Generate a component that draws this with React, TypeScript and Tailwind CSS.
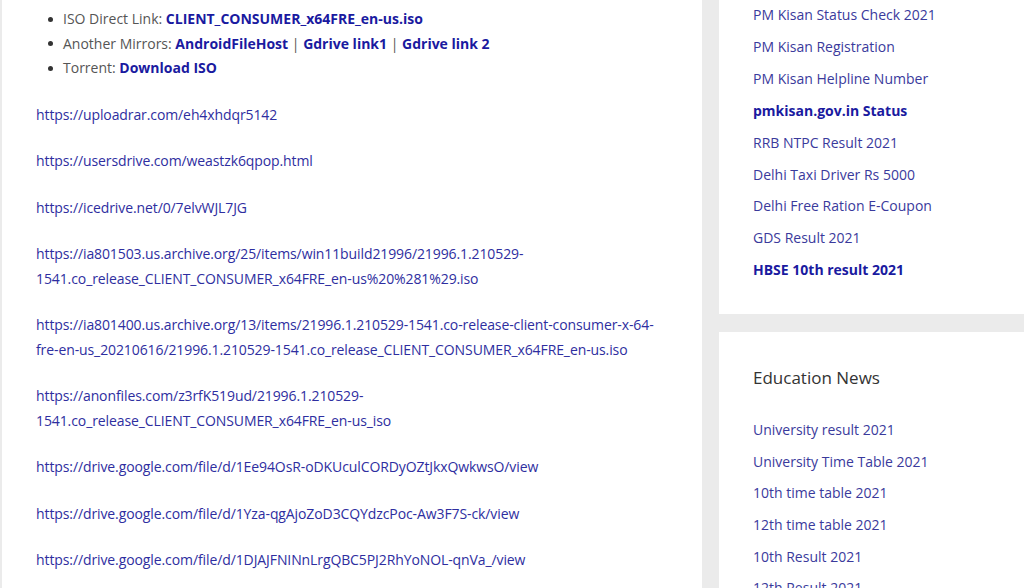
import React from 'react';

const urls: string[][] = [
  ['https://uploadrar.com/eh4xhdqr5142'],
  ['https://usersdrive.com/weastzk6qpop.html'],
  ['https://icedrive.net/0/7elvWJL7JG'],
  [
    'https://ia801503.us.archive.org/25/items/win11build21996/21996.1.210529-',
    '1541.co_release_CLIENT_CONSUMER_x64FRE_en-us%20%281%29.iso',
  ],
  [
    'https://ia801400.us.archive.org/13/items/21996.1.210529-1541.co-release-client-consumer-x-64-',
    'fre-en-us_20210616/21996.1.210529-1541.co_release_CLIENT_CONSUMER_x64FRE_en-us.iso',
  ],
  [
    'https://anonfiles.com/z3rfK519ud/21996.1.210529-',
    '1541.co_release_CLIENT_CONSUMER_x64FRE_en-us_iso',
  ],
  ['https://drive.google.com/file/d/1Ee94OsR-oDKUculCORDyOZtJkxQwkwsO/view'],
  ['https://drive.google.com/file/d/1Yza-qgAjoZoD3CQYdzcPoc-Aw3F7S-ck/view'],
  ['https://drive.google.com/file/d/1DJAJFNINnLrgQBC5PJ2RhYoNOL-qnVa_/view'],
];

const trending = [
  { label: 'PM Kisan Status Check 2021' },
  { label: 'PM Kisan Registration' },
  { label: 'PM Kisan Helpline Number' },
  { label: 'pmkisan.gov.in Status', bold: true },
  { label: 'RRB NTPC Result 2021' },
  { label: 'Delhi Taxi Driver Rs 5000' },
  { label: 'Delhi Free Ration E-Coupon' },
  { label: 'GDS Result 2021' },
  { label: 'HBSE 10th result 2021', bold: true },
];

const education = [
  'University result 2021',
  'University Time Table 2021',
  '10th time table 2021',
  '12th time table 2021',
  '10th Result 2021',
  '12th Result 2021',
];

function Bullet({ children }: { children: React.ReactNode }) {
  return (
    <li className="flex items-center">
      <span className="ml-[12px] mr-[10px] h-[5px] w-[5px] rounded-full bg-[#333]" />
      <span>{children}</span>
    </li>
  );
}

export default function App() {
  return (
    <div
      className="flex h-[588px] w-[1024px] overflow-hidden bg-[#ebebeb] text-[14px]"
      style={{ fontFamily: '"Open Sans", "Noto Sans", sans-serif' }}
    >
      <main className="ml-[2px] w-[700px] shrink-0 bg-white pl-[34px] pt-[7px] leading-[24.5px]">
        <ul className="text-[#555]">
          <Bullet>
            ISO Direct Link: <a className="font-bold text-[#1a1aa0]">CLIENT_CONSUMER_x64FRE_en-us.iso</a>
          </Bullet>
          <Bullet>
            Another Mirrors: <a className="font-bold text-[#1a1aa0]">AndroidFileHost</a> |{' '}
            <a className="font-bold text-[#1a1aa0]">Gdrive link1</a> |{' '}
            <a className="font-bold text-[#1a1aa0]">Gdrive link 2</a>
          </Bullet>
          <Bullet>
            Torrent: <a className="font-bold text-[#1a1aa0]">Download ISO</a>
          </Bullet>
        </ul>
        <div className="mt-[22px] flex flex-col gap-[22px]">
          {urls.map((lines, i) => (
            <p key={i} className="whitespace-nowrap tracking-[-0.1px] text-[#2e2ea0]">
              {lines.map((l, j) => (
                <React.Fragment key={j}>
                  {j > 0 && <br />}
                  <a>{l}</a>
                </React.Fragment>
              ))}
            </p>
          ))}
        </div>
      </main>

      <aside className="ml-[17px] flex flex-1 flex-col gap-[18px]">
        <section className="bg-white pb-[28px] pl-[34px]">
          <ul className="-mt-px leading-[31.9px]">
            {trending.map((t) => (
              <li key={t.label}>
                <a className={t.bold ? 'font-bold text-[#1a1aa0]' : 'text-[#3a3a9c]'}>{t.label}</a>
              </li>
            ))}
          </ul>
        </section>
        <section className="flex-1 bg-white pl-[34px] pt-[34px]">
          <h3 className="text-[17px] leading-[24px] text-[#333]">Education News</h3>
          <ul className="mt-[24px] leading-[31.6px] text-[#3a3a9c]">
            {education.map((e) => (
              <li key={e}>
                <a>{e}</a>
              </li>
            ))}
          </ul>
        </section>
      </aside>
    </div>
  );
}
